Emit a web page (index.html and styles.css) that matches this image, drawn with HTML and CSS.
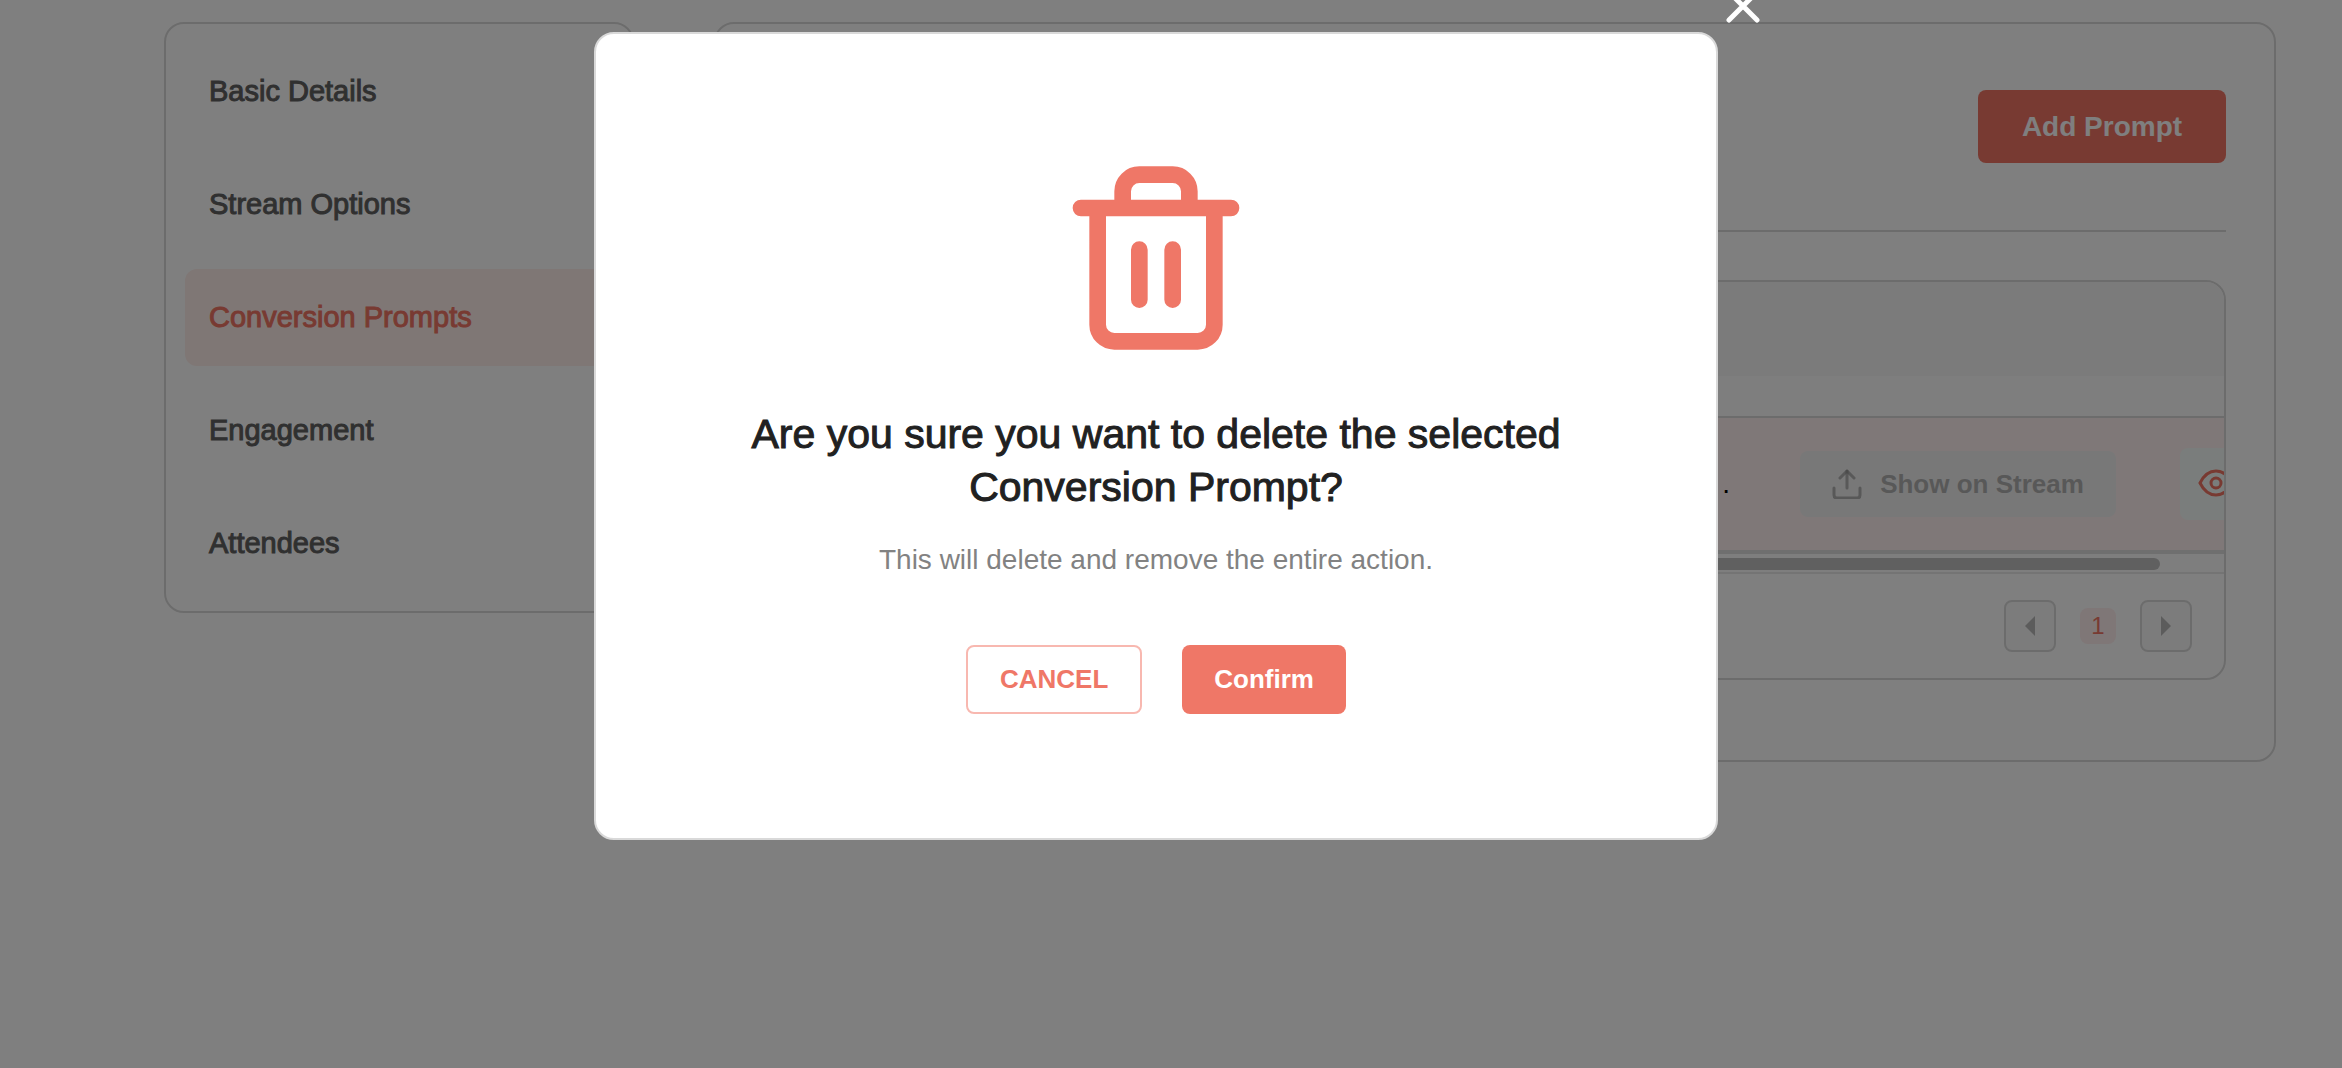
FILE: index.html
```html
<!DOCTYPE html>
<html lang="en">
<head>
<meta charset="UTF-8">
<meta name="viewport" content="width=device-width, initial-scale=1.0">
<title>Conversion Prompts</title>
<link rel="stylesheet" href="styles.css">
</head>
<body>
<div class="page">
    <nav class="sidebar">
        <a href="#">Basic Details</a>
        <a href="#">Stream Options</a>
        <a href="#" class="active">Conversion Prompts</a>
        <a href="#">Engagement</a>
        <a href="#">Attendees</a>
    </nav>
    <main class="panel">
        <div class="panel-header">
            <button type="button" class="btn-add">Add Prompt</button>
        </div>
        <div class="table-card">
            <div class="table-head"></div>
            <div class="table-gap"></div>
            <div class="table-row">
                <span class="row-text">.</span>
                <button type="button" class="btn-show">
                    <svg width="30" height="30" viewBox="0 0 30 30" fill="none" stroke="currentColor" stroke-width="3" stroke-linecap="round" stroke-linejoin="round">
                        <path d="M2 19v7q0 3 3 3h20q3 0 3-3v-7"/>
                        <path class="arrow" d="M15 19V2"/>
                        <path class="arrow" d="M8 9l7-7 7 7"/>
                    </svg>
                    Show on Stream
                </button>
                <button type="button" class="btn-eye" aria-label="Preview">
                    <svg width="36" height="28" viewBox="0 0 36 28" fill="none" stroke="currentColor" stroke-width="3">
                        <path d="M2 14C6 6 11 2 18 2s12 4 16 12c-4 8-9 12-16 12S6 22 2 14z"/>
                        <circle cx="18" cy="14" r="5"/>
                    </svg>
                </button>
            </div>
            <div class="scroll-track"><div class="scroll-thumb"></div></div>
            <div class="pager">
                <button type="button" class="btn-page" aria-label="Previous">
                    <svg width="10" height="20" viewBox="0 0 10 20"><path d="M10 0v20L0 10z"/></svg>
                </button>
                <span class="page-current">1</span>
                <button type="button" class="btn-page" aria-label="Next">
                    <svg width="10" height="20" viewBox="0 0 10 20"><path d="M0 0v20l10-10z"/></svg>
                </button>
            </div>
        </div>
    </main>
</div>

<div class="overlay">
    <div class="modal" role="dialog" aria-labelledby="modalTitle">
        <button type="button" class="btn-close" aria-label="Close">
            <svg width="34" height="34" viewBox="0 0 34 34" fill="none" stroke="currentColor" stroke-width="5" stroke-linecap="round"><path d="M3 3l28 28M31 3L3 31"/></svg>
        </button>
        <svg class="trash" width="200" height="200" viewBox="0 0 24 24" fill="none" stroke="currentColor" stroke-width="2" stroke-linecap="round" stroke-linejoin="round">
            <path d="M3 6h18M19 6v14a2 2 0 0 1-2 2H7a2 2 0 0 1-2-2V6M8 6V4a2 2 0 0 1 2-2h4a2 2 0 0 1 2 2v2M10 11v6M14 11v6"/>
        </svg>
        <h2 id="modalTitle">Are you sure you want to delete the selected Conversion Prompt?</h2>
        <p>This will delete and remove the entire action.</p>
        <div class="modal-actions">
            <button type="button" class="btn-cancel">CANCEL</button>
            <button type="button" class="btn-confirm">Confirm</button>
        </div>
    </div>
</div>
</body>
</html>
```
FILE: styles.css
```css
* {
    box-sizing: border-box;
}
body {
    margin: 0;
    background: #fff;
    font-family: "Liberation Sans", Arial, sans-serif;
    font-size: 28px;
    color: #212121;
}
button {
    font-family: inherit;
    border: none;
    padding: 0;
    cursor: pointer;
}
.page {
    display: flex;
    align-items: flex-start;
    gap: 80px;
    padding: 22px 66px 0 164px;
}
.sidebar {
    flex: 0 0 470px;
    display: flex;
    flex-direction: column;
    gap: 16px;
    padding: 19px;
    border: 2px solid #d9d9d9;
    border-radius: 20px;
}
.sidebar a {
    padding: 0 24px;
    line-height: 97px;
    font-size: 29px;
    color: #616161;
    text-decoration: none;
    border-radius: 12px;
    -webkit-text-stroke: 1px;
}
.sidebar a.active {
    background: #ffeeea;
    color: #f17564;
}
.panel {
    flex: 1;
    min-width: 0;
    padding: 66px 48px 80px;
    border: 2px solid #d9d9d9;
    border-radius: 20px;
}
.panel-header {
    display: flex;
    justify-content: flex-end;
    padding-bottom: 67px;
    margin-bottom: 48px;
    border-bottom: 2px solid #d9d9d9;
}
.btn-add {
    width: 248px;
    height: 73px;
    border-radius: 8px;
    background: #f17564;
    color: #fff;
    font-size: 28px;
    font-weight: bold;
}
.table-card {
    border: 2px solid #d9d9d9;
    border-radius: 20px;
    overflow: hidden;
}
.table-head {
    height: 94px;
    background: #f6f6f6;
}
.table-gap {
    height: 40px;
    background: #fcfcfc;
}
.table-row {
    display: flex;
    align-items: center;
    justify-content: flex-end;
    height: 138px;
    background: #fff0f0;
    border-top: 2px solid #d9d9d9;
    border-bottom: 4px solid #dedede;
}
.row-text {
    margin-right: 70px;
    color: #000;
}
.btn-show {
    display: flex;
    align-items: center;
    justify-content: center;
    gap: 18px;
    width: 316px;
    height: 66px;
    border-radius: 8px;
    background: #f0f0f0;
    color: #b0b0b0;
    font-size: 26px;
    font-weight: bold;
}
.btn-show .arrow {
    stroke: #888;
    stroke-opacity: 0.6;
}
.btn-eye {
    flex: none;
    width: 72px;
    height: 72px;
    margin-left: 64px;
    margin-right: -28px;
    border-radius: 8px;
    background: #f4fbf8;
    color: #f17564;
}
.scroll-track {
    height: 20px;
    padding-top: 4px;
    background: #fcfcfc;
    border-bottom: 2px solid #e8e8e8;
}
.scroll-thumb {
    height: 12px;
    margin-right: 64px;
    border-radius: 6px;
    background: #c1c1c1;
}
.pager {
    display: flex;
    align-items: center;
    justify-content: flex-end;
    gap: 24px;
    padding: 26px 32px;
}
.btn-page {
    display: flex;
    align-items: center;
    justify-content: center;
    width: 52px;
    height: 52px;
    border: 2px solid #d9d9d9;
    border-radius: 8px;
    background: #f8f8f8;
}
.btn-page path {
    fill: #b8b8b8;
}
.page-current {
    width: 36px;
    line-height: 36px;
    border-radius: 8px;
    background: #ffeeee;
    color: #f17564;
    font-size: 24px;
    text-align: center;
}
.overlay {
    position: fixed;
    inset: 0;
    padding: 32px 30px 0 0;
    background: rgba(0, 0, 0, 0.5);
}
.modal {
    position: relative;
    width: 48vw;
    margin: 0 auto;
    padding: 124px 100px;
    border: 2px solid #d9d9d9;
    border-radius: 20px;
    background: #fff;
    text-align: center;
}
.btn-close {
    position: absolute;
    top: -45px;
    right: -44px;
    height: 34px;
    background: none;
    color: #fff;
}
.trash {
    display: block;
    margin: 0 auto 50px;
    color: #ef7767;
}
.modal h2 {
    margin: 0 0 28px;
    font-size: 41px;
    font-weight: normal;
    line-height: 53px;
    -webkit-text-stroke: 1px;
}
.modal p {
    margin: 0 0 67px;
    font-size: 28px;
    line-height: 36px;
    color: #828282;
}
.modal-actions {
    display: flex;
    justify-content: center;
    gap: 40px;
}
.modal-actions button {
    height: 69px;
    padding: 0 32px;
    border-radius: 8px;
    font-size: 26px;
    font-weight: bold;
}
.modal-actions .btn-cancel {
    border: 2px solid #f8b8b0;
    background: #fff;
    color: #ef7767;
}
.modal-actions .btn-confirm {
    background: #ef7767;
    color: #fff;
}
```
